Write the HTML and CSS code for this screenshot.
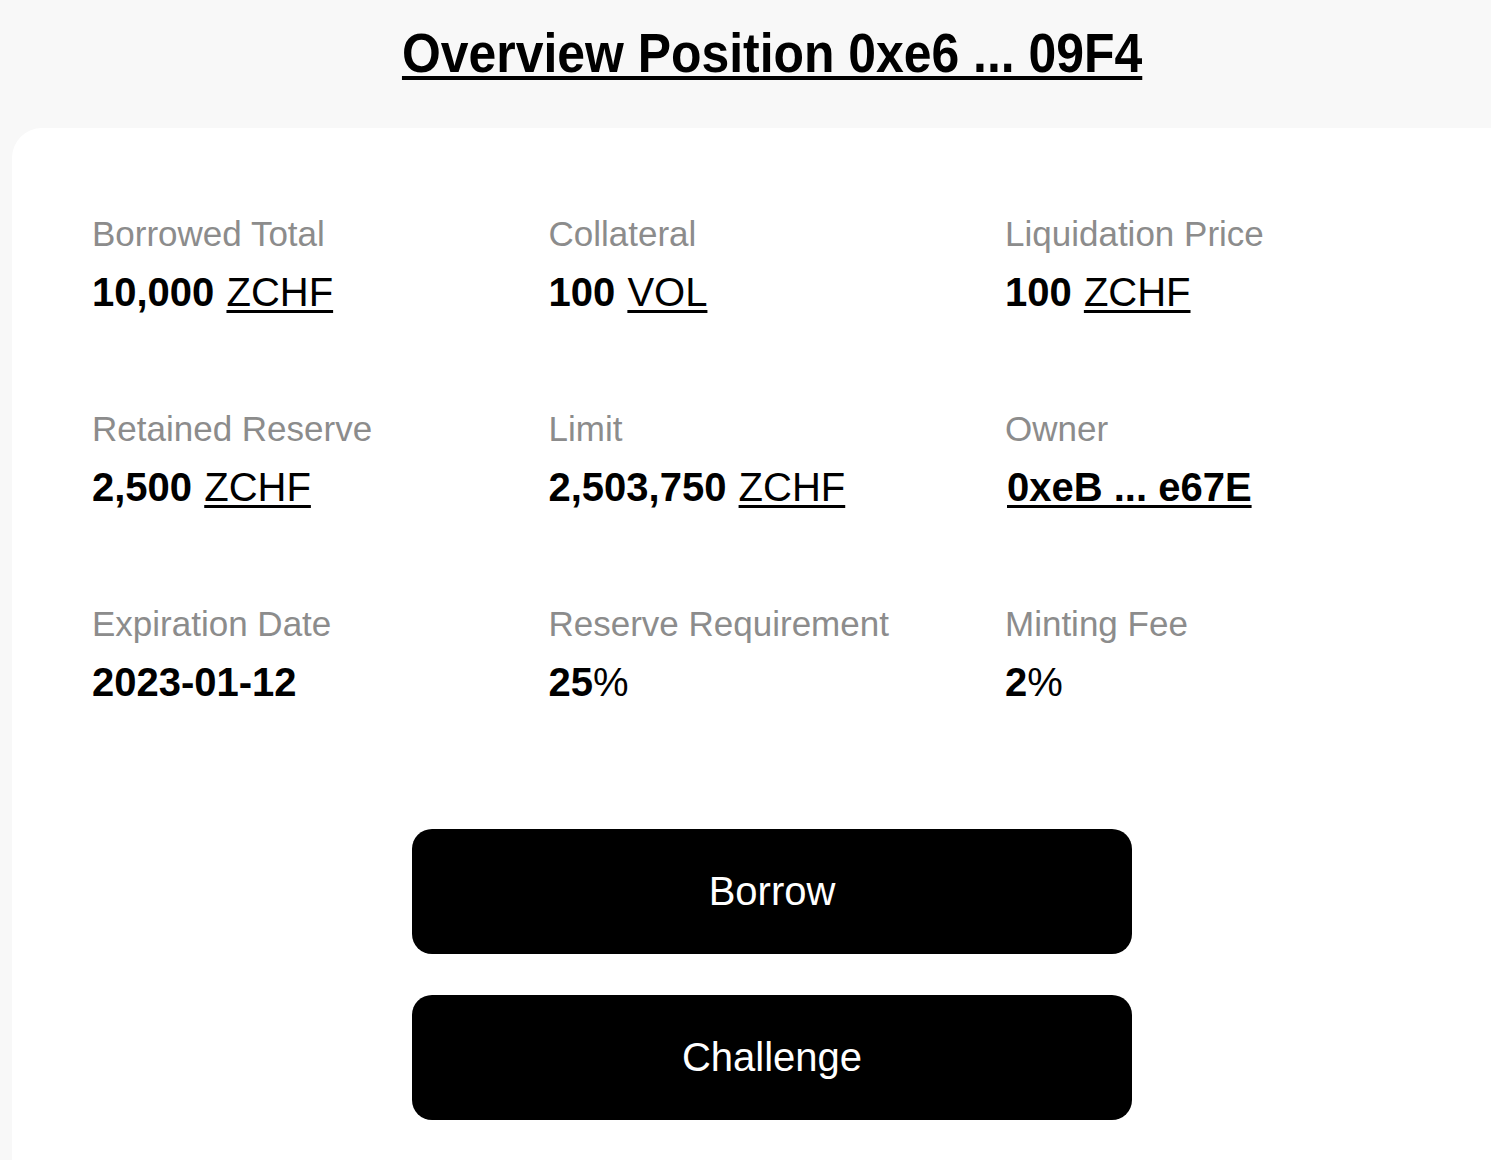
FILE: index.html
```html
<!DOCTYPE html>
<html lang="en">
<head>
<meta charset="utf-8">
<title>Overview Position</title>
<link rel="stylesheet" href="styles.css">
</head>
<body>
<div class="page">
  <header class="head">
    <h1 class="title"><a href="#" class="title-link">Overview Position 0xe6 ... 09F4</a></h1>
  </header>
  <main class="card">
    <div class="grid">
      <div class="item">
        <div class="label">Borrowed Total</div>
        <div class="value"><b>10,000</b> <a href="#" class="unit">ZCHF</a></div>
      </div>
      <div class="item">
        <div class="label">Collateral</div>
        <div class="value"><b>100</b> <a href="#" class="unit">VOL</a></div>
      </div>
      <div class="item">
        <div class="label">Liquidation Price</div>
        <div class="value"><b>100</b> <a href="#" class="unit">ZCHF</a></div>
      </div>
      <div class="item">
        <div class="label">Retained Reserve</div>
        <div class="value"><b>2,500</b> <a href="#" class="unit">ZCHF</a></div>
      </div>
      <div class="item">
        <div class="label">Limit</div>
        <div class="value"><b>2,503,750</b> <a href="#" class="unit">ZCHF</a></div>
      </div>
      <div class="item">
        <div class="label">Owner</div>
        <div class="value"><a href="#" class="addr">0xeB ... e67E</a></div>
      </div>
      <div class="item">
        <div class="label">Expiration Date</div>
        <div class="value"><b>2023-01-12</b></div>
      </div>
      <div class="item">
        <div class="label">Reserve Requirement</div>
        <div class="value"><b>25</b>%</div>
      </div>
      <div class="item">
        <div class="label">Minting Fee</div>
        <div class="value"><b>2</b>%</div>
      </div>
    </div>
    <div class="actions">
      <button class="btn">Borrow</button>
      <button class="btn">Challenge</button>
    </div>
  </main>
</div>
</body>
</html>
```

FILE: styles.css
```css
html, body {
  margin: 0;
  padding: 0;
}
body {
  background: #f8f8f8;
  font-family: "Liberation Sans", Arial, sans-serif;
  color: #000;
  overflow-x: hidden;
}
.page {
  margin-left: 12px;
  width: 1520px;
}
.head {
  height: 128px;
  display: flex;
  justify-content: center;
  align-items: flex-start;
}
.title {
  margin: 22px 0 0;
  font-size: 55px;
  line-height: 62px;
  font-weight: 700;
  transform: scaleX(0.907);
}
.title-link {
  color: #000;
  text-decoration: underline;
  text-decoration-thickness: 4px;
  text-underline-offset: 4px;
}
.card {
  background: #fff;
  border-radius: 30px 0 0 0;
  padding: 86px 0 60px 80px;
  min-height: 946px;
  box-sizing: border-box;
}
.grid {
  display: grid;
  grid-template-columns: 456.5px 456.5px 456.5px;
  row-gap: 93px;
}
.item {
  display: flex;
  flex-direction: column;
  gap: 14px;
}
.label {
  font-size: 35px;
  line-height: 40px;
  color: #8c8c8c;
}
.value {
  font-size: 40px;
  line-height: 48px;
}
.value b {
  font-weight: 700;
}
.unit {
  color: #000;
  text-decoration: underline;
  text-decoration-thickness: 3px;
  text-underline-offset: 4px;
  margin-left: 1px;
}
.addr {
  color: #000;
  font-weight: 700;
  margin-left: 2px;
  text-decoration: underline;
  text-decoration-thickness: 3px;
  text-underline-offset: 4px;
}
.actions {
  display: flex;
  flex-direction: column;
  align-items: center;
  gap: 41px;
  margin-top: 123px;
  margin-left: -80px;
}
.btn {
  width: 720px;
  height: 125px;
  border: 0;
  border-radius: 20px;
  background: #000;
  color: #fff;
  font-family: "Liberation Sans", Arial, sans-serif;
  font-size: 40px;
  cursor: pointer;
}
```
